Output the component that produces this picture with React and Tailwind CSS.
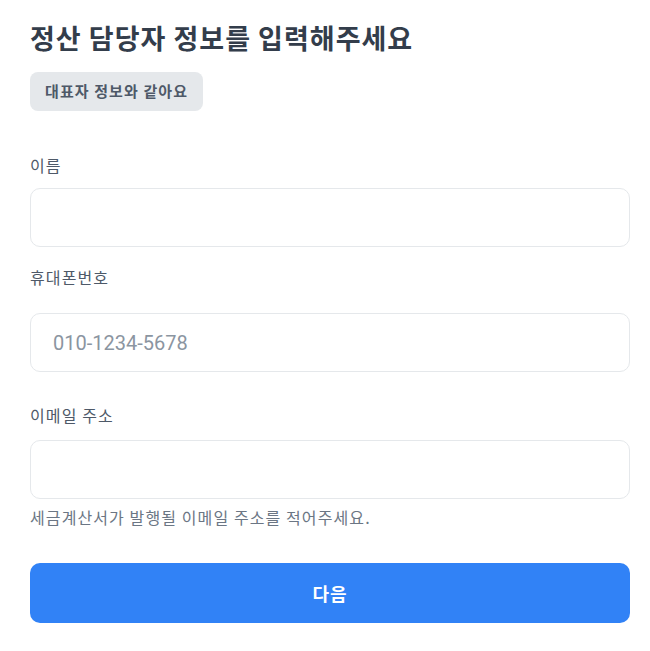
import React from "react";

export default function App() {
  return (
    <div className="bg-white min-h-[651px] px-[30px] pt-[20px] font-['Noto_Sans_CJK_KR',sans-serif]">
      <h1 className="text-[27px] leading-[36px] font-bold tracking-[1px] text-[#333d4b]">정산 담당자 정보를 입력해주세요</h1>
      <button className="mt-[16px] h-[39px] px-[15px] rounded-lg bg-[#e5e8eb] text-[15px] tracking-[1.1px] font-semibold text-[#4e5968]">
        대표자 정보와 같아요
      </button>
      <div className="mt-[42px] text-[16px] leading-[24px] tracking-[1.1px] text-[#4e5968]">이름</div>
      <input className="mt-[11px] block w-[600px] h-[59px] rounded-[10px] border border-[#e5e8eb] px-[22px] text-[18px] outline-none" />
      <div className="mt-[18px] text-[16px] leading-[24px] tracking-[1.1px] text-[#4e5968]">휴대폰번호</div>
      <input
        className="mt-[24px] block w-[600px] h-[59px] rounded-[10px] border border-[#e5e8eb] px-[22px] font-['Roboto',sans-serif] text-[20px] outline-none placeholder:text-[#8b95a1]"
        placeholder="010-1234-5678"
      />
      <div className="mt-[31px] text-[16px] leading-[24px] tracking-[1.1px] text-[#4e5968]">이메일 주소</div>
      <input className="mt-[13px] block w-[600px] h-[59px] rounded-[10px] border border-[#e5e8eb] px-[22px] text-[18px] outline-none" />
      <div className="mt-[6px] text-[16px] leading-[24px] tracking-[1.1px] text-[#6b7684]">세금계산서가 발행될 이메일 주소를 적어주세요.</div>
      <button className="mt-[34px] block w-[600px] h-[60px] rounded-[10px] bg-[#3182f6] text-white text-[18px] tracking-[1px] font-bold">다음</button>
    </div>
  );
}
